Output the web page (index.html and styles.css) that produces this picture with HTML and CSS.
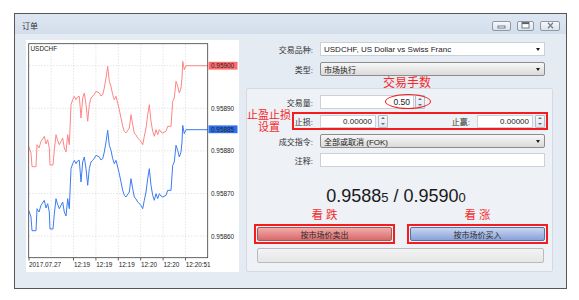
FILE: index.html
```html
<!DOCTYPE html>
<html lang="zh">
<head>
  <meta charset="UTF-8">
  <meta name="viewport" content="width=device-width, initial-scale=1.0">
  <title>订单</title>
  <link rel="stylesheet" href="styles.css">
</head>
<body>

  <!-- Order window -->
  <div class="window">
    <div class="titlebar">
      <span class="title">订单</span>
      <div class="caption-btns">
        <span class="cap-btn cap-min">
          <svg width="9" height="6" viewBox="0 0 9 6"><rect x="1" y="3" width="7" height="2" fill="#fff" stroke="#58606b" stroke-width="0.8"/></svg>
        </span>
        <span class="cap-btn cap-max">
          <svg width="9" height="7" viewBox="0 0 9 7"><rect x="1" y="0.5" width="7" height="5.5" fill="#fff" stroke="#58606b" stroke-width="0.8"/><rect x="1" y="0.5" width="7" height="1.6" fill="#58606b"/></svg>
        </span>
        <span class="cap-btn cap-close">
          <svg width="9" height="7" viewBox="0 0 9 7"><path d="M2 0.8 L7 6.2 M7 0.8 L2 6.2" stroke="#7a818b" stroke-width="1.3"/></svg>
        </span>
      </div>
    </div>

    <div class="window-body">

      <!-- Tick chart -->
      <div class="chart-panel">
        <svg width="213" height="232" viewBox="0 0 213 232">
          <defs>
            <clipPath id="plot"><rect x="2.7" y="3.7" width="179" height="214"/></clipPath>
          </defs>
          <g stroke="#d4d4d4" stroke-width="0.6" stroke-dasharray="1.5,1.5">
            <line x1="3" y1="25.7" x2="181" y2="25.7"/>
            <line x1="3" y1="68.3" x2="181" y2="68.3"/>
            <line x1="3" y1="110.9" x2="181" y2="110.9"/>
            <line x1="3" y1="153.5" x2="181" y2="153.5"/>
            <line x1="3" y1="196.1" x2="181" y2="196.1"/>
            <line x1="25.1" y1="4" x2="25.1" y2="217"/>
            <line x1="47.5" y1="4" x2="47.5" y2="217"/>
            <line x1="69.9" y1="4" x2="69.9" y2="217"/>
            <line x1="92.3" y1="4" x2="92.3" y2="217"/>
            <line x1="114.7" y1="4" x2="114.7" y2="217"/>
            <line x1="137.1" y1="4" x2="137.1" y2="217"/>
            <line x1="159.5" y1="4" x2="159.5" y2="217"/>
          </g>
          <g clip-path="url(#plot)" fill="none" stroke-width="1">
            <polyline stroke="#3b7cf2" transform="translate(0,64)" points="2.7,106.3 5,113 6,126.7 10,126.7 11,104.7 13,108 15,101.3 18.3,96.3 20,104 21.7,99.7 23.3,108 24,125 27,125 28.3,110 30,94.7 31.5,100 33.3,104.7 36.7,98 38.3,108 40,112 41.7,94.7 43.3,104.7 45,64.7 46.7,59.7 48.3,56.3 50,59.7 51.5,57 53.3,56.3 55,78 56.7,58 58.3,53 60,64.7 61.7,81.3 63.3,64.7 65,58 66.7,56.3 68.5,54 70,51.3 73.3,53 75,56 76.7,54.7 78.3,48 80,38 81.7,26.3 83.3,41.3 85,46.3 86.7,54.7 88.3,59.7 90,56.3 91.7,63 93.3,69.7 95,78 96.7,86.3 98.3,91.3 100,93 103.3,88 105,74.7 106.7,84.7 108.3,93 110,95 111.7,98 115,101.3 116.7,104.7 118.3,96.3 120,88 121.7,74.7 123.3,64.7 125,81.3 126.7,91.3 128.3,96.3 130,89.7 131.7,94.7 133.3,89.7 135,92 136.7,93 140,91.3 141.7,86.3 145,86.3 146.7,61.3 148.3,58 150,41.3 151.7,46.3 153.3,53 155,48 156,38 156.7,21.3 158.3,29.7 160,25.7 182,25.7"/>
            <polyline stroke="#ff8585" points="2.7,106.3 5,113 6,126.7 10,126.7 11,104.7 13,108 15,101.3 18.3,96.3 20,104 21.7,99.7 23.3,108 24,125 27,125 28.3,110 30,94.7 31.5,100 33.3,104.7 36.7,98 38.3,108 40,112 41.7,94.7 43.3,104.7 45,64.7 46.7,59.7 48.3,56.3 50,59.7 51.5,57 53.3,56.3 55,78 56.7,58 58.3,53 60,64.7 61.7,81.3 63.3,64.7 65,58 66.7,56.3 68.5,54 70,51.3 73.3,53 75,56 76.7,54.7 78.3,48 80,38 81.7,26.3 83.3,41.3 85,46.3 86.7,54.7 88.3,59.7 90,56.3 91.7,63 93.3,69.7 95,78 96.7,86.3 98.3,91.3 100,93 103.3,88 105,74.7 106.7,84.7 108.3,93 110,95 111.7,98 115,101.3 116.7,104.7 118.3,96.3 120,88 121.7,74.7 123.3,64.7 125,81.3 126.7,91.3 128.3,96.3 130,89.7 131.7,94.7 133.3,89.7 135,92 136.7,93 140,91.3 141.7,86.3 145,86.3 146.7,61.3 148.3,58 150,41.3 151.7,46.3 153.3,53 155,48 156,38 156.7,21.3 158.3,29.7 160,25.7 182,25.7"/>
          </g>
          <rect x="2.7" y="3.7" width="179" height="214" fill="none" stroke="#3c3c3c" stroke-width="0.8"/>
          <g stroke="#3c3c3c" stroke-width="0.8">
            <line x1="3" y1="217.7" x2="3" y2="220.5"/>
            <line x1="47.5" y1="217.7" x2="47.5" y2="220.5"/>
            <line x1="69.9" y1="217.7" x2="69.9" y2="220.5"/>
            <line x1="92.3" y1="217.7" x2="92.3" y2="220.5"/>
            <line x1="114.7" y1="217.7" x2="114.7" y2="220.5"/>
            <line x1="137.1" y1="217.7" x2="137.1" y2="220.5"/>
            <line x1="159.5" y1="217.7" x2="159.5" y2="220.5"/>
          </g>
          <g class="axis-text">
            <text x="4.5" y="11">USDCHF</text>
            <rect x="182.5" y="21.8" width="29" height="7.8" fill="#ff6b6b"/>
            <text x="185" y="28.2" fill="#fff">0.95900</text>
            <text x="185" y="70.8">0.95890</text>
            <rect x="182.5" y="85.4" width="29" height="7.8" fill="#2d6ff0"/>
            <text x="185" y="91.8" fill="#fff">0.95885</text>
            <text x="185" y="113.4">0.95880</text>
            <text x="185" y="156">0.95870</text>
            <text x="185" y="198.6">0.95860</text>
            <text x="3" y="226.8">2017.07.27</text>
            <text x="48" y="226.8">12:19</text>
            <text x="70.3" y="226.8">12:19</text>
            <text x="92.7" y="226.8">12:19</text>
            <text x="115" y="226.8">12:20</text>
            <text x="137.4" y="226.8">12:20</text>
            <text x="159.8" y="226.8">12:20:51</text>
          </g>
        </svg>
      </div>

      <!-- Order form -->
      <div class="order-form">
        <div class="form-row">
          <label>交易品种:</label>
          <div class="field select">USDCHF, US Dollar vs Swiss Franc<span class="arrow"></span></div>
        </div>
        <div class="form-row type-row">
          <label>类型:</label>
          <div class="field select select-gray">市场执行<span class="arrow"></span></div>
        </div>

        <div class="order-box">
          <span class="note note-lots">交易手数</span>
          <span class="ellipse"></span>
          <span class="note note-sltp">止盈止损<br>设置</span>

          <div class="form-row">
            <label>交易量:</label>
            <div class="num-input volume">0.50</div>
            <div class="spin"><span class="up"></span><span class="down"></span></div>
          </div>

          <div class="sltp-row">
            <div class="sltp-group">
              <label>止损:</label>
              <div class="num-input">0.00000</div>
              <div class="spin"><span class="up"></span><span class="down"></span></div>
            </div>
            <div class="sltp-group">
              <label>止赢:</label>
              <div class="num-input">0.00000</div>
              <div class="spin"><span class="up"></span><span class="down"></span></div>
            </div>
          </div>

          <div class="form-row fill-row">
            <label>成交指令:</label>
            <div class="field select select-gray">全部或取消 (FOK)<span class="arrow"></span></div>
          </div>
          <div class="form-row comment-row">
            <label>注释:</label>
            <div class="field"></div>
          </div>

          <div class="quote">0.9588<small>5</small> / 0.9590<small>0</small></div>

          <div class="trade-labels">
            <span>看 跌</span>
            <span>看 涨</span>
          </div>
          <div class="trade-btns">
            <div class="btn-mark"><button class="btn btn-sell">按市场价卖出</button></div>
            <div class="btn-mark"><button class="btn btn-buy">按市场价买入</button></div>
          </div>
          <div class="progress"></div>
        </div>
      </div>

    </div>
  </div>

</body>
</html>
```

FILE: styles.css
```css
/* General Reset */
* {
  box-sizing: border-box;
}

body {
  margin: 0;
  background: #ffffff;
  font-family: "Liberation Sans", "Noto Sans CJK SC", sans-serif;
  font-size: 8px;
  color: #222;
}

/* Window frame */
.window {
  width: 553px;
  height: 276px;
  margin: 13px 0 0 14px;
  border: 1px solid #575757;
  background: #e5ebf3;
  display: flex;
  flex-direction: column;
}

.titlebar {
  height: 20px;
  padding: 3px 6px 0 7px;
  display: flex;
  align-items: center;
  justify-content: space-between;
  background: linear-gradient(#dde7f2, #d2deeb);
}

.title {
  font-size: 8px;
  color: #333;
}

.caption-btns {
  display: flex;
  gap: 6px;
}

.cap-btn {
  height: 10px;
  width: 19px;
  border: 1px solid #8e99a7;
  border-radius: 2px;
  background: linear-gradient(#f7f9fb, #dce3ea);
  display: flex;
  align-items: center;
  justify-content: center;
}

.cap-max {
  width: 17px;
}

.cap-close {
  width: 20px;
}

.cap-btn svg {
  display: block;
}

.window-body {
  flex: 1;
  display: flex;
  padding: 6px 0 0 11px;
}

/* Chart */
.chart-panel {
  flex: none;
  width: 213px;
  height: 232px;
  background: #fff;
}

.chart-panel svg {
  display: block;
}

.axis-text text {
  font-family: "Liberation Sans", sans-serif;
  font-size: 6.4px;
  fill: #222;
}

/* Form */
.order-form {
  width: 307px;
  margin-left: 7px;
  padding-top: 2px;
}

.form-row {
  display: flex;
  align-items: center;
  height: 14px;
}

.form-row label {
  flex: none;
  width: 67px;
  margin-right: 7px;
  text-align: right;
  color: #333;
}

.type-row {
  margin-top: 6px;
}

.field {
  width: 225px;
  height: 14px;
  border: 1px solid #cbd1d8;
  background: #fff;
  display: flex;
  align-items: center;
  padding: 0 4px 0 3px;
  white-space: nowrap;
}

.select .arrow {
  margin-left: auto;
  width: 0;
  height: 0;
  border-left: 2.5px solid transparent;
  border-right: 2.5px solid transparent;
  border-top: 3px solid #1e1e1e;
}

.select-gray {
  background: linear-gradient(#f7f7f7, #dadada);
  border-color: #8c8c8c;
  border-radius: 2px;
}

.order-box {
  position: relative;
  height: 184px;
  margin-top: 12px;
  padding: 6px 7px 0 0;
  border: 1px solid #d4dae2;
  border-radius: 2px;
  background: #eef1f6;
}

.order-box .form-row label {
  width: 66px;
}

.num-input {
  width: 56px;
  height: 13px;
  border: 1px solid #cbd1d8;
  background: #fff;
  text-align: right;
  padding-right: 3px;
  line-height: 11px;
}

.num-input.volume {
  width: 94px;
  height: 14px;
  font-size: 8.5px;
  line-height: 12px;
}

.spin {
  width: 10px;
  height: 13px;
  margin-left: 2px;
  border: 1px solid #b3bcc8;
  border-radius: 1px;
  background: linear-gradient(#f7f8fa, #e1e5eb);
  display: flex;
  flex-direction: column;
  align-items: center;
  justify-content: space-around;
}

.form-row .spin {
  height: 14px;
  margin-left: 1px;
}

.spin .up,
.spin .down {
  width: 0;
  height: 0;
  border-left: 2px solid transparent;
  border-right: 2px solid transparent;
}

.spin .up {
  border-bottom: 2px solid #5a6f92;
}

.spin .down {
  border-top: 2px solid #5a6f92;
}

.sltp-row {
  height: 18px;
  margin: 3px -3px 0 45px;
  padding-right: 1px;
  border: 2px solid #f41c1c;
  display: flex;
  align-items: center;
  justify-content: space-between;
}

.sltp-group {
  display: flex;
  align-items: center;
}

.sltp-group label {
  width: 19px;
  margin-right: 7px;
  text-align: right;
  color: #333;
}

.fill-row {
  margin-top: 4px;
}

.comment-row {
  margin-top: 5px;
}

.quote {
  margin-top: 19px;
  text-align: center;
  font-size: 18px;
  line-height: 20px;
  color: #1a1a1a;
}

.quote small {
  font-size: 13px;
  line-height: 1;
}

.trade-labels,
.trade-btns {
  display: grid;
  grid-template-columns: 141px 141px;
  column-gap: 12px;
  margin-left: 7px;
}

.trade-labels {
  margin-top: 2px;
  font-size: 11.5px;
  line-height: 14px;
  color: #f42a2a;
  text-align: center;
}

.trade-btns {
  margin-top: 2px;
}

.btn-mark {
  border: 2px solid #f41c1c;
  padding: 1px;
}

.btn {
  display: block;
  width: 100%;
  height: 14px;
  padding: 0;
  font-family: inherit;
  font-size: 8px;
  color: #2a2a2a;
  border-radius: 2px;
  cursor: pointer;
}

.btn-sell {
  border: 1px solid #a45858;
  background: linear-gradient(#f6a9a9, #d66b6b);
}

.btn-buy {
  border: 1px solid #5670a8;
  background: linear-gradient(#c9d6f3, #8aa1d7);
}

.progress {
  height: 15px;
  margin: 4px 1px 0 10px;
  border: 1px solid #b8bcc1;
  border-radius: 2px;
  background: linear-gradient(#f3f3f3, #e6e6e6);
}

/* Red annotations */
.note {
  position: absolute;
  color: #f42a2a;
  white-space: nowrap;
}

.note-lots {
  left: 136px;
  top: -12px;
  font-size: 12px;
  line-height: 12px;
}

.note-sltp {
  left: 0;
  top: 21px;
  width: 44px;
  text-align: center;
  font-size: 11px;
  line-height: 11.5px;
}

.ellipse {
  position: absolute;
  left: 138px;
  top: 5px;
  width: 46px;
  height: 15px;
  border: 1.5px solid #f41c1c;
  border-radius: 50%;
}
```
